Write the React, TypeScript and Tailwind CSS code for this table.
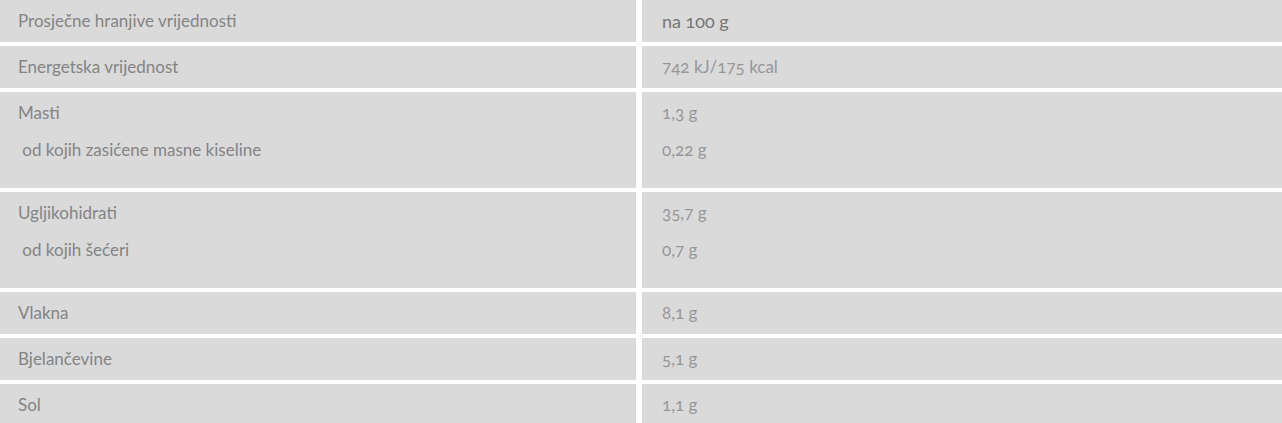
const rows: { label: string[]; value: string[]; head?: boolean }[] = [
  { label: ['Prosječne hranjive vrijednosti'], value: ['na 100 g'], head: true },
  { label: ['Energetska vrijednost'], value: ['742 kJ/175 kcal'] },
  { label: ['Masti', '\u00a0od kojih zasićene masne kiseline'], value: ['1,3 g', '0,22 g'] },
  { label: ['Ugljikohidrati', '\u00a0od kojih šećeri'], value: ['35,7 g', '0,7 g'] },
  { label: ['Vlakna'], value: ['8,1 g'] },
  { label: ['Bjelančevine'], value: ['5,1 g'] },
  { label: ['Sol'], value: ['1,1 g'] },
];

function Cell({ lines, className }: { lines: string[]; className: string }) {
  const multi = lines.length > 1;
  return (
    <div className={`bg-[#dadada] py-[11px] ${className}`}>
      {lines.map((line, i) => (
        <p key={i} className={`h-5 leading-5 whitespace-pre ${multi ? 'mb-[17px]' : ''}`}>
          {line}
        </p>
      ))}
    </div>
  );
}

export default function App() {
  return (
    <div className="w-[1282px] bg-white font-['Lato',sans-serif]">
      <div className="grid grid-cols-[636px_1fr] gap-x-[6px] gap-y-[4px]">
        {rows.map((row, i) => (
          <div key={i} className="contents">
            <Cell lines={row.label} className="pl-[18px] text-[17px] text-[#848484]" />
            <Cell
              lines={row.value}
              className={`pl-[20px] oldstyle-nums ${
                row.head ? 'text-[18px] text-[#767676]' : 'text-[17px] text-[#979799]'
              }`}
            />
          </div>
        ))}
      </div>
    </div>
  );
}
